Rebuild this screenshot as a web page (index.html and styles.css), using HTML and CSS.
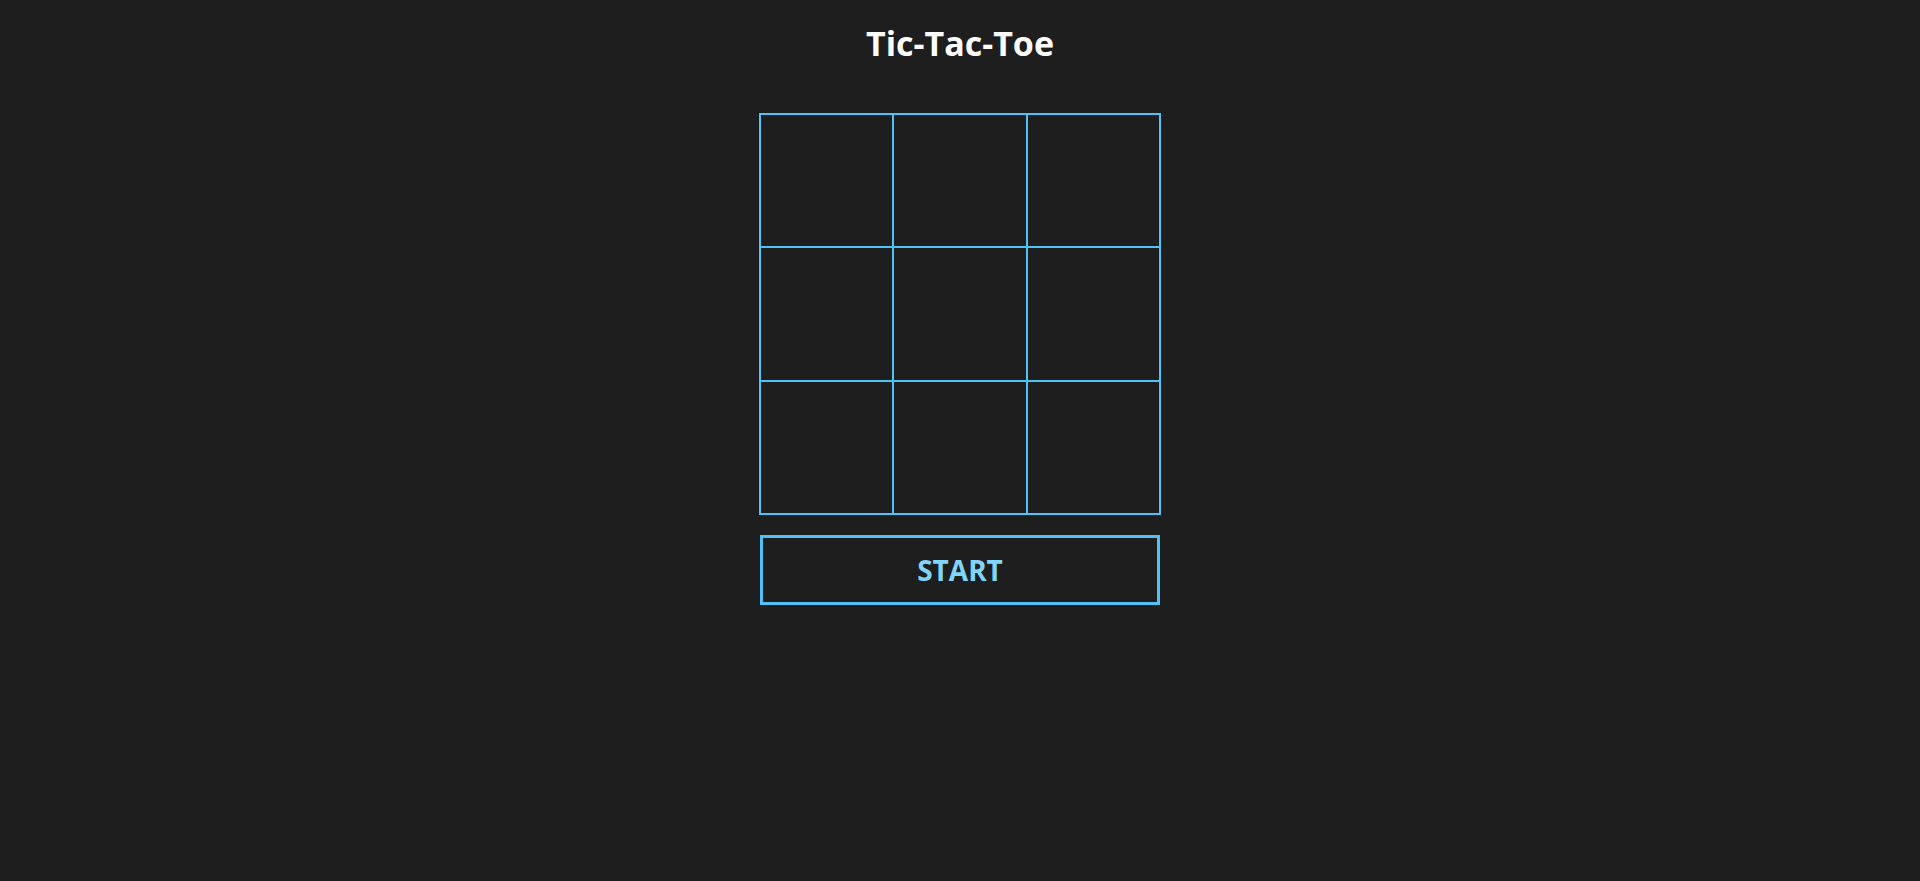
FILE: index.html
```html
<!DOCTYPE html>
<html lang="en">
<head>
<meta charset="utf-8">
<title>Tic-Tac-Toe</title>
<link rel="stylesheet" href="styles.css">
</head>
<body>
<main class="app">
  <h1 class="title">Tic-Tac-Toe</h1>
  <div class="board">
    <div class="cell"></div>
    <div class="cell"></div>
    <div class="cell"></div>
    <div class="cell"></div>
    <div class="cell"></div>
    <div class="cell"></div>
    <div class="cell"></div>
    <div class="cell"></div>
    <div class="cell"></div>
  </div>
  <button class="start">START</button>
</main>
</body>
</html>
```
FILE: styles.css
```css
html, body {
  margin: 0;
  padding: 0;
  background: #1e1e1e;
  height: 100%;
}
body {
  font-family: "Open Sans", "Noto Sans", sans-serif;
}
.app {
  display: flex;
  flex-direction: column;
  align-items: center;
}
.title {
  margin: 0;
  padding-top: 21px;
  height: 113px;
  box-sizing: border-box;
  color: #ffffff;
  font-size: 34px;
  line-height: 44px;
  font-weight: 700;
}
.board {
  width: 400px;
  display: grid;
  grid-template-columns: repeat(3, 1fr);
  border: 1px solid #4fc3f7;
}
.cell {
  height: 131.33px;
  border: 1px solid #4fc3f7;
}
.start {
  margin-top: 20px;
  width: 400px;
  height: 70px;
  background: transparent;
  border: 3px solid #4fc3f7;
  color: #81d4fa;
  font-family: "Open Sans", "Noto Sans", sans-serif;
  font-weight: 700;
  font-size: 28px;
  padding: 0;
}
```
